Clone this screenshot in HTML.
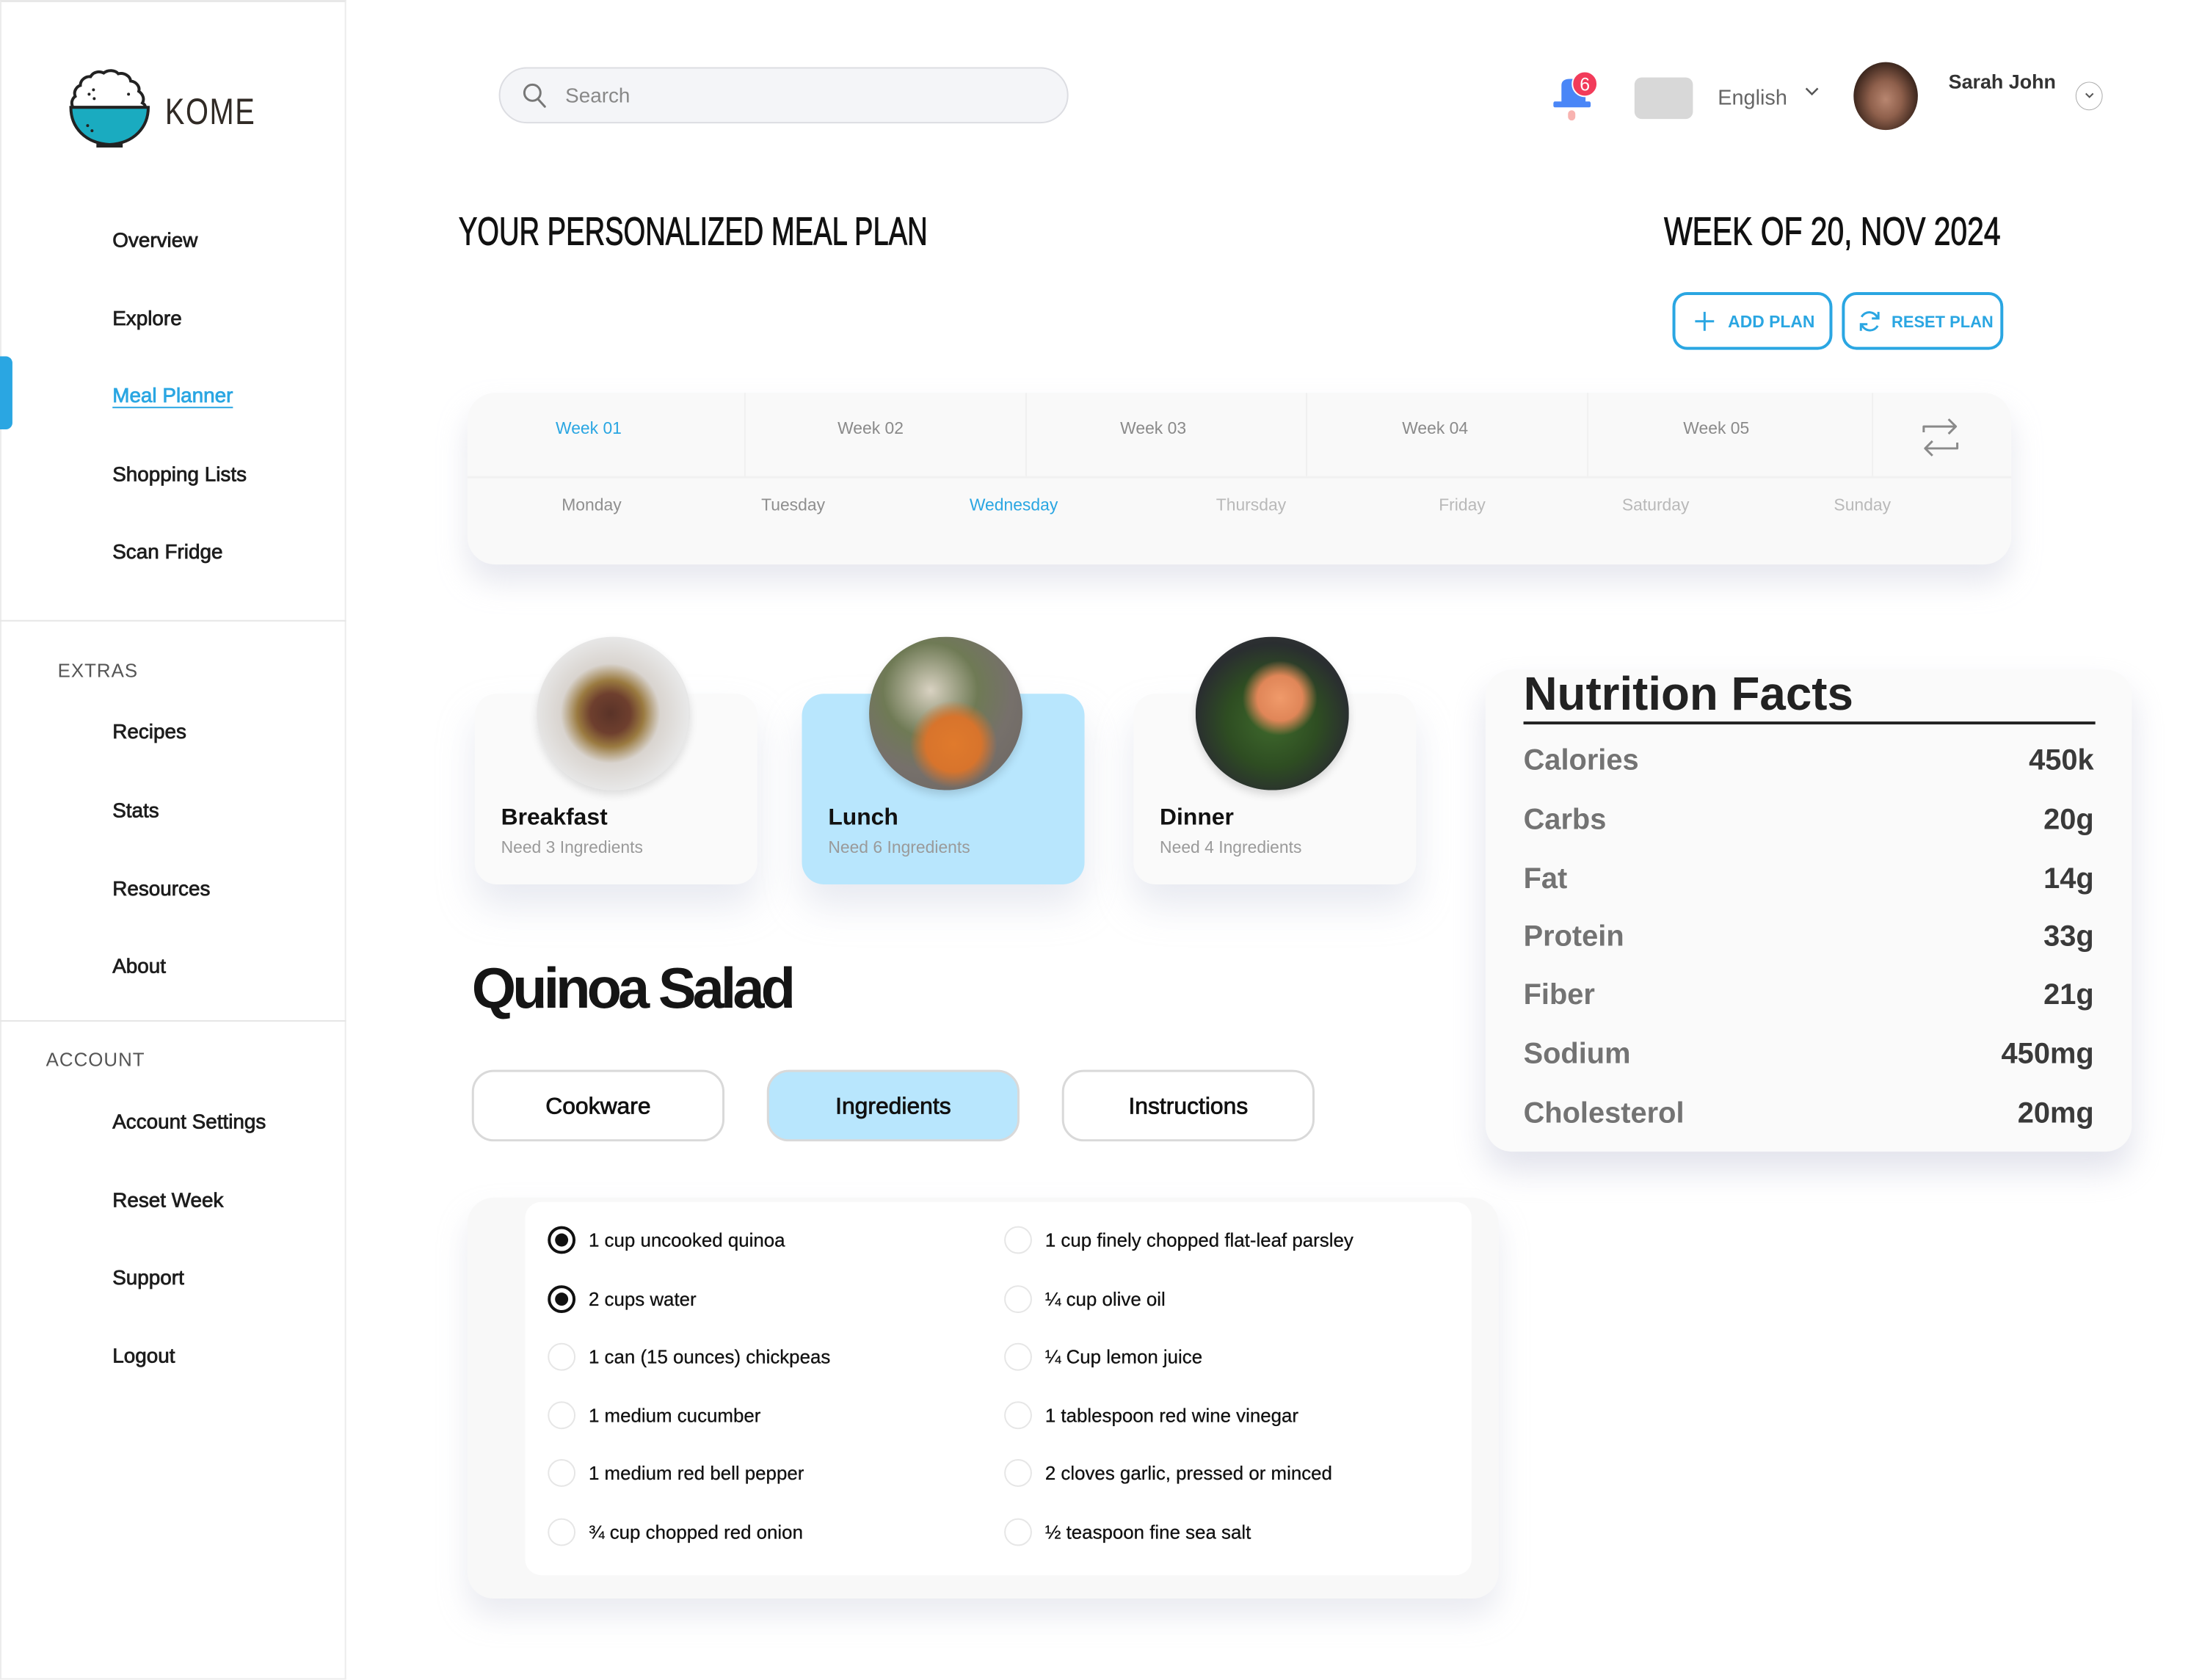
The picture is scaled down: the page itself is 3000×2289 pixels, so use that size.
<!DOCTYPE html>
<html><head><meta charset="utf-8">
<style>
*{margin:0;padding:0;box-sizing:border-box}
body{width:3000px;height:2276px;background:#fff;position:relative;overflow:hidden;font-family:"Liberation Sans",sans-serif;color:#1a1a1a}
#w{position:absolute;left:0;top:0;width:3016px;height:2288px;transform:scale(0.995);transform-origin:0 0}
.a{position:absolute}
.t{position:absolute;white-space:nowrap;line-height:1}
.nav{font-size:28px;color:#1d1d1d;-webkit-text-stroke:0.8px #1d1d1d;left:154px}
.sec{font-size:26px;color:#555;letter-spacing:1px}
.wk{font-size:23px;color:#8a8a8a;transform:translateX(-50%)}
.dy{font-size:23px;color:#b9b9b9;transform:translateX(-50%)}
.card{position:absolute;top:950px;width:387px;height:261px;border-radius:30px;background:#fafafa;box-shadow:0 30px 50px rgba(190,195,215,.35)}
.card .h{position:absolute;left:36px;top:150px;font-size:32px;font-weight:bold;color:#111}
.card .s{position:absolute;left:36px;top:197px;font-size:23px;color:#9a9a9a}
.plate{position:absolute;width:210px;height:210px;border-radius:50%}
.tab{position:absolute;top:1465px;width:346px;height:98px;border:3px solid #d9d9d9;border-radius:30px;background:#fff;font-size:32px;text-align:center;line-height:92px;color:#111;-webkit-text-stroke:0.8px #111}
.ing{font-size:26px;color:#111;-webkit-text-stroke:0.3px #111}
.rd{position:absolute;width:38px;height:38px;border-radius:50%;border:2px solid #e6e6e6;background:#fff}
.rd.on{border:4px solid #111}
.rd.on::after{content:"";position:absolute;left:6px;top:6px;width:18px;height:18px;border-radius:50%;background:#111}
.nl{font-size:40px;font-weight:bold;color:#737373;left:2086px}
.nv{font-size:40px;font-weight:bold;color:#3a3a3a;right:149px}
</style></head><body><div id="w">

<!-- sidebar -->
<div class="a" style="left:0;top:0;width:474px;height:2300px;border:2px solid #ececec;border-top:3px solid #e8e8e8"></div>
<div class="a" style="left:0;top:849px;width:474px;height:2px;background:#e6e6e6"></div>
<div class="a" style="left:0;top:1397px;width:474px;height:2px;background:#e6e6e6"></div>

<svg class="a" style="left:92px;top:94px" width="116" height="112" viewBox="0 0 116 112">
<path d="M8 53 C4 46 8 40 11 38 C8 30 14 24 18 23 C18 15 26 10 32 11 C36 4 44 3 50 6 C56 1 66 2 70 7 C78 5 86 10 87 17 C95 18 100 25 98 31 C104 35 106 42 103 47 C108 50 107 53 106 53 Z" fill="#fff" stroke="#222" stroke-width="4"/>
<path d="M5 53 L111 53 C111 80 92 102 58 104 C24 102 5 80 5 53 Z" fill="#1aabc0" stroke="#222" stroke-width="4"/>
<rect x="40" y="103" width="36" height="5" fill="#222"/>
<circle cx="36" cy="29" r="2" fill="#222"/><circle cx="30" cy="35" r="2" fill="#222"/><circle cx="37" cy="41" r="2" fill="#222"/><circle cx="84" cy="35" r="2" fill="#222"/><circle cx="28" cy="78" r="2" fill="#222"/><circle cx="34" cy="85" r="2" fill="#222"/>
</svg>
<div class="t" style="left:226px;top:128px;font-size:50px;color:#302a25;transform:scaleX(.8);transform-origin:left;letter-spacing:2px">KOME</div>

<div class="t nav" style="top:315px">Overview</div>
<div class="t nav" style="top:422px">Explore</div>
<div class="t nav" style="top:528px;color:#2aa6e2;-webkit-text-stroke:0.8px #2aa6e2;text-decoration:underline;text-underline-offset:6px">Meal Planner</div>
<div class="a" style="left:0;top:488px;width:17px;height:100px;border-radius:0 9px 9px 0;background:#2aa6e2"></div>
<div class="t nav" style="top:636px">Shopping Lists</div>
<div class="t nav" style="top:742px">Scan Fridge</div>

<div class="t sec" style="left:79px;top:905px">EXTRAS</div>
<div class="t nav" style="top:988px">Recipes</div>
<div class="t nav" style="top:1096px">Stats</div>
<div class="t nav" style="top:1203px">Resources</div>
<div class="t nav" style="top:1309px">About</div>
<div class="t sec" style="left:63px;top:1438px">ACCOUNT</div>
<div class="t nav" style="top:1522px">Account Settings</div>
<div class="t nav" style="top:1630px">Reset Week</div>
<div class="t nav" style="top:1736px">Support</div>
<div class="t nav" style="top:1843px">Logout</div>

<!-- header -->
<div class="a" style="left:683px;top:92px;width:780px;height:77px;border-radius:40px;background:#f4f5f8;border:2px solid #dcdde2"></div>
<svg class="a" style="left:714px;top:112px" width="36" height="38" viewBox="0 0 36 38"><circle cx="15" cy="15" r="11" fill="none" stroke="#777" stroke-width="3"/><path d="M23 24 L32 34" stroke="#777" stroke-width="3" stroke-linecap="round"/></svg>
<div class="t" style="left:774px;top:117px;font-size:28px;color:#888">Search</div>

<svg class="a" style="left:2124px;top:95px" width="70" height="72" viewBox="0 0 70 72">
<path d="M14 22 C14 16 18 13 26 13 L36 13 C44 13 47 17 47 22 L47 44 L52 44 C53 44 54 45 54 47 L54 50 C54 51 53 52 52 52 L5 52 C4 52 3 51 3 50 L3 47 C3 45 4 44 5 44 L14 44 Z" fill="#4a86f7"/>
<rect x="23" y="56" width="10" height="14" rx="5" fill="#f8b3b0"/>
<circle cx="46" cy="20" r="17" fill="#f23b5a" stroke="#fff" stroke-width="2"/>
<text x="46" y="29" font-size="25" font-family="Liberation Sans" fill="#fff" text-anchor="middle">6</text>
</svg>
<div class="a" style="left:2238px;top:106px;width:80px;height:57px;border-radius:10px;background:#d8d8d8"></div>
<div class="t" style="left:2352px;top:120px;font-size:29px;color:#666">English</div>
<svg class="a" style="left:2470px;top:118px" width="22" height="16" viewBox="0 0 22 16"><path d="M3 3 L11 11 L19 3" fill="none" stroke="#555" stroke-width="2.5"/></svg>
<div class="a" style="left:2538px;top:85px;width:88px;height:93px;border-radius:50%;background:radial-gradient(ellipse at 50% 55%,#b88670 0%,#8f604c 35%,#4a3025 65%,#1e1612 85%)"></div>
<div class="t" style="left:2668px;top:99px;font-size:27px;font-weight:bold;color:#333">Sarah John</div>
<div class="a" style="left:2842px;top:112px;width:37px;height:39px;border-radius:50%;border:1.5px solid #aaa"></div>
<svg class="a" style="left:2852px;top:124px" width="18" height="14" viewBox="0 0 18 14"><path d="M4 4 L9 9 L14 4" fill="none" stroke="#555" stroke-width="2"/></svg>

<!-- titles -->
<div class="t" style="left:628px;top:290px;font-size:54px;color:#111;-webkit-text-stroke:1px #111;transform:scaleX(.71);transform-origin:left">YOUR PERSONALIZED MEAL PLAN</div>
<div class="t" style="right:277px;top:290px;font-size:54px;color:#111;-webkit-text-stroke:1px #111;transform:scaleX(.76);transform-origin:right">WEEK OF 20, NOV 2024</div>

<div class="a" style="left:2290px;top:400px;width:219px;height:79px;border:4px solid #2aa6e2;border-radius:20px"></div>
<svg class="a" style="left:2318px;top:424px" width="32" height="32" viewBox="0 0 32 32"><path d="M16 3 V29 M3 16 H29" stroke="#2aa6e2" stroke-width="3"/></svg>
<div class="t" style="left:2366px;top:429px;font-size:23px;font-weight:bold;color:#2aa6e2">ADD PLAN</div>
<div class="a" style="left:2522px;top:400px;width:221px;height:79px;border:4px solid #2aa6e2;border-radius:20px"></div>
<svg class="a" style="left:2542px;top:422px" width="36" height="36" viewBox="0 0 36 36"><path d="M29 14 A12 12 0 0 0 7 12 M7 22 A12 12 0 0 0 29 24" fill="none" stroke="#2aa6e2" stroke-width="3"/><path d="M30 5 V14 H21 M6 31 V22 H15" fill="none" stroke="#2aa6e2" stroke-width="3"/></svg>
<div class="t" style="left:2590px;top:430px;font-size:22px;font-weight:bold;color:#2aa6e2">RESET PLAN</div>

<!-- week panel -->
<div class="a" style="left:640px;top:538px;width:2114px;height:235px;border-radius:38px;background:#f9f9f9;box-shadow:0 24px 40px rgba(195,198,215,.4)"></div>
<div class="a" style="left:640px;top:652px;width:2114px;height:3px;background:#f1f1f1"></div>
<div class="a" style="left:1019px;top:538px;width:2px;height:114px;background:#f0f0f0"></div>
<div class="a" style="left:1404px;top:538px;width:2px;height:114px;background:#f0f0f0"></div>
<div class="a" style="left:1788px;top:538px;width:2px;height:114px;background:#f0f0f0"></div>
<div class="a" style="left:2173px;top:538px;width:2px;height:114px;background:#f0f0f0"></div>
<div class="a" style="left:2563px;top:538px;width:2px;height:114px;background:#f0f0f0"></div>
<div class="t wk" style="left:806px;top:575px;color:#2aa6e2">Week 01</div>
<div class="t wk" style="left:1192px;top:575px">Week 02</div>
<div class="t wk" style="left:1579px;top:575px">Week 03</div>
<div class="t wk" style="left:1965px;top:575px">Week 04</div>
<div class="t wk" style="left:2350px;top:575px">Week 05</div>
<svg class="a" style="left:2630px;top:570px" width="56" height="58" viewBox="0 0 56 58"><path d="M4 22 V14 H48 M38 4 L48 14 L38 24 M50 36 V44 H6 M16 34 L6 44 L16 54" fill="none" stroke="#8a8a8a" stroke-width="3" stroke-linejoin="round"/></svg>
<div class="t dy" style="left:810px;top:680px;color:#8f8f8f">Monday</div>
<div class="t dy" style="left:1086px;top:680px;color:#8f8f8f">Tuesday</div>
<div class="t dy" style="left:1388px;top:680px;color:#2aa6e2">Wednesday</div>
<div class="t dy" style="left:1713px;top:680px">Thursday</div>
<div class="t dy" style="left:2002px;top:680px">Friday</div>
<div class="t dy" style="left:2267px;top:680px">Saturday</div>
<div class="t dy" style="left:2550px;top:680px">Sunday</div>

<!-- meal cards -->
<div class="card" style="left:650px"><div class="h">Breakfast</div><div class="s">Need 3 Ingredients</div></div>
<div class="card" style="left:1098px;background:#b8e6fd"><div class="h">Lunch</div><div class="s">Need 6 Ingredients</div></div>
<div class="card" style="left:1552px"><div class="h">Dinner</div><div class="s">Need 4 Ingredients</div></div>
<div class="plate" style="left:735px;top:872px;background:radial-gradient(circle at 48% 50%,#5a3328 0%,#6e3f2e 18%,#9a7a40 30%,#d9d4cf 45%,#e8e8e8 70%,#cfcfcf 100%);box-shadow:0 6px 12px rgba(0,0,0,.12)"></div>
<div class="plate" style="left:1190px;top:872px;background:radial-gradient(circle at 55% 70%,#e07a2c 0%,#d8742c 20%,transparent 32%),radial-gradient(circle at 40% 35%,#d9d2c2 0%,#6f7a55 35%,#76706b 60%,#6b6560 100%);box-shadow:0 6px 12px rgba(0,0,0,.15)"></div>
<div class="plate" style="left:1637px;top:872px;background:radial-gradient(circle at 55% 40%,#f09a6a 0%,#e08658 18%,transparent 30%),radial-gradient(circle at 50% 55%,#3f6a2c 0%,#2e4d22 40%,#2a2e30 68%,#3a3a3c 100%);box-shadow:0 6px 12px rgba(0,0,0,.15)"></div>

<!-- Quinoa -->
<div class="t" style="left:646px;top:1314px;font-size:78px;font-weight:bold;color:#151515;letter-spacing:-5px">Quinoa Salad</div>
<div class="tab" style="left:646px">Cookware</div>
<div class="tab" style="left:1050px;background:#b8e6fd">Ingredients</div>
<div class="tab" style="left:1454px">Instructions</div>

<!-- ingredients -->
<div class="a" style="left:640px;top:1640px;width:1412px;height:549px;border-radius:36px;background:#f8f8f8;box-shadow:0 24px 40px rgba(195,198,215,.35)"></div>
<div class="a" style="left:719px;top:1646px;width:1296px;height:511px;border-radius:22px;background:#fff"></div>
<div class="rd on" style="left:750px;top:1679px"></div><div class="t ing" style="left:806px;top:1685px">1 cup uncooked quinoa</div>
<div class="rd on" style="left:750px;top:1760px"></div><div class="t ing" style="left:806px;top:1766px">2 cups water</div>
<div class="rd" style="left:750px;top:1839px"></div><div class="t ing" style="left:806px;top:1845px">1 can (15 ounces) chickpeas</div>
<div class="rd" style="left:750px;top:1919px"></div><div class="t ing" style="left:806px;top:1925px">1 medium cucumber</div>
<div class="rd" style="left:750px;top:1998px"></div><div class="t ing" style="left:806px;top:2004px">1 medium red bell pepper</div>
<div class="rd" style="left:750px;top:2079px"></div><div class="t ing" style="left:806px;top:2085px">¾ cup chopped red onion</div>
<div class="rd" style="left:1375px;top:1679px"></div><div class="t ing" style="left:1431px;top:1685px">1 cup finely chopped flat-leaf parsley</div>
<div class="rd" style="left:1375px;top:1760px"></div><div class="t ing" style="left:1431px;top:1766px">¼ cup olive oil</div>
<div class="rd" style="left:1375px;top:1839px"></div><div class="t ing" style="left:1431px;top:1845px">¼ Cup lemon juice</div>
<div class="rd" style="left:1375px;top:1919px"></div><div class="t ing" style="left:1431px;top:1925px">1 tablespoon red wine vinegar</div>
<div class="rd" style="left:1375px;top:1998px"></div><div class="t ing" style="left:1431px;top:2004px">2 cloves garlic, pressed or minced</div>
<div class="rd" style="left:1375px;top:2079px"></div><div class="t ing" style="left:1431px;top:2085px">½ teaspoon fine sea salt</div>

<!-- nutrition -->
<div class="a" style="left:2034px;top:917px;width:885px;height:660px;border-radius:36px;background:#fafafa;box-shadow:0 26px 44px rgba(190,194,212,.45)"></div>
<div class="t" style="left:2086px;top:918px;font-size:64px;font-weight:bold;color:#222">Nutrition Facts</div>
<div class="a" style="left:2086px;top:988px;width:783px;height:4px;background:#222"></div>
<div class="t nl" style="top:1021px">Calories</div><div class="t nv" style="top:1021px">450k</div>
<div class="t nl" style="top:1102px">Carbs</div><div class="t nv" style="top:1102px">20g</div>
<div class="t nl" style="top:1183px">Fat</div><div class="t nv" style="top:1183px">14g</div>
<div class="t nl" style="top:1262px">Protein</div><div class="t nv" style="top:1262px">33g</div>
<div class="t nl" style="top:1342px">Fiber</div><div class="t nv" style="top:1342px">21g</div>
<div class="t nl" style="top:1423px">Sodium</div><div class="t nv" style="top:1423px">450mg</div>
<div class="t nl" style="top:1504px">Cholesterol</div><div class="t nv" style="top:1504px">20mg</div>

</div></body></html>
